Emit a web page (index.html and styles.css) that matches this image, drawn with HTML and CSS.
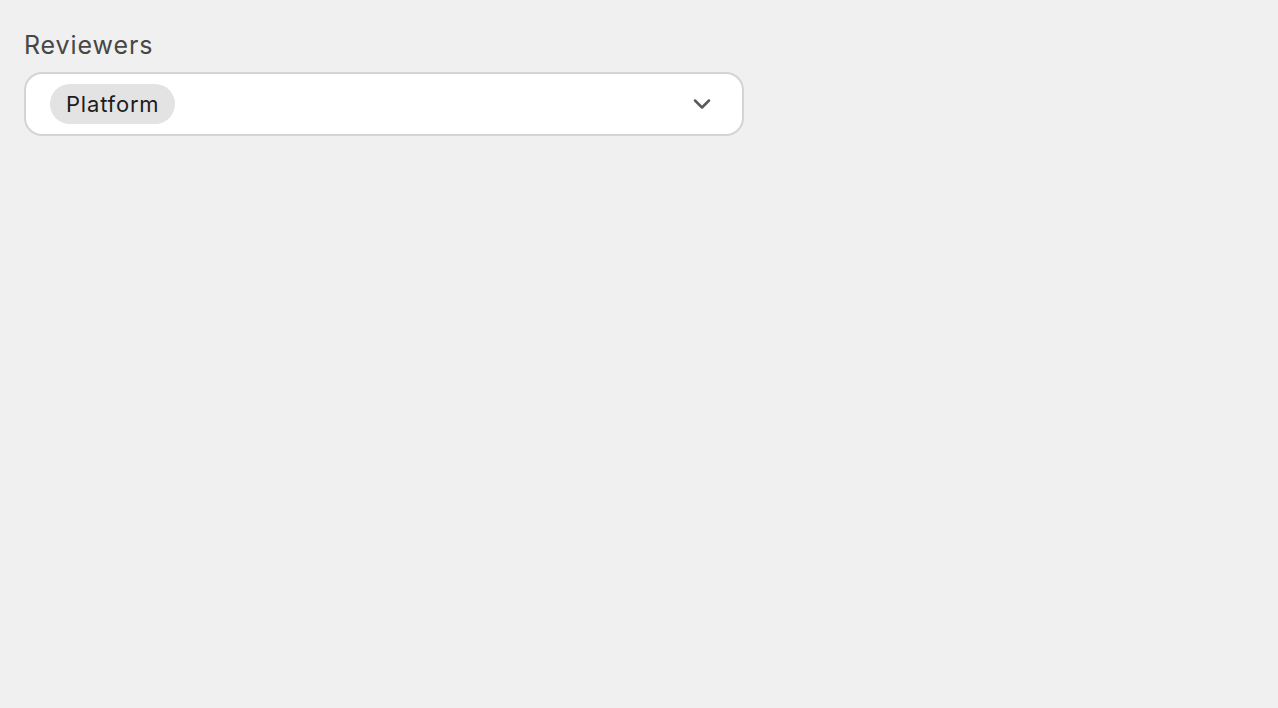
FILE: index.html
```html
<!DOCTYPE html>
<html lang="en">
<head>
  <meta charset="UTF-8" />
  <title>Reviewers</title>
  <link rel="stylesheet" href="styles.css">
</head>
<body>
  <div class="field">
    <label class="field-label">Reviewers</label>
    <div class="select">
      <div class="chips">
        <span class="chip">Platform</span>
      </div>
      <svg class="chevron" width="24" height="24" viewBox="0 0 24 24">
        <path d="M5 8.5 L12 15.5 L19 8.5" fill="none" stroke="#5a5a5a" stroke-width="2.5" stroke-linecap="round" stroke-linejoin="round"/>
      </svg>
    </div>
  </div>
</body>
</html>
```

FILE: styles.css
```css
body { margin: 0; padding: 28px 24px; background: #f0f0f0; font-family: Inter, "Noto Sans", sans-serif; }
.field { width: 720px; display: flex; flex-direction: column; gap: 10px; }
.field-label { font-size: 25px; letter-spacing: 0.9px; color: #474747; line-height: 34px; }
.select { height: 64px; box-sizing: border-box; background: #fff; border: 2px solid #d4d4d4; border-radius: 18px; display: flex; align-items: center; padding: 0 28px 0 24px; }
.chips { flex: 1; display: flex; gap: 8px; }
.chip { background: #e3e3e3; border-radius: 20px; height: 40px; line-height: 40px; padding: 0 16px; font-size: 22px; letter-spacing: 0.8px; color: #1c1c1c; }
.chevron { display: block; }
```
